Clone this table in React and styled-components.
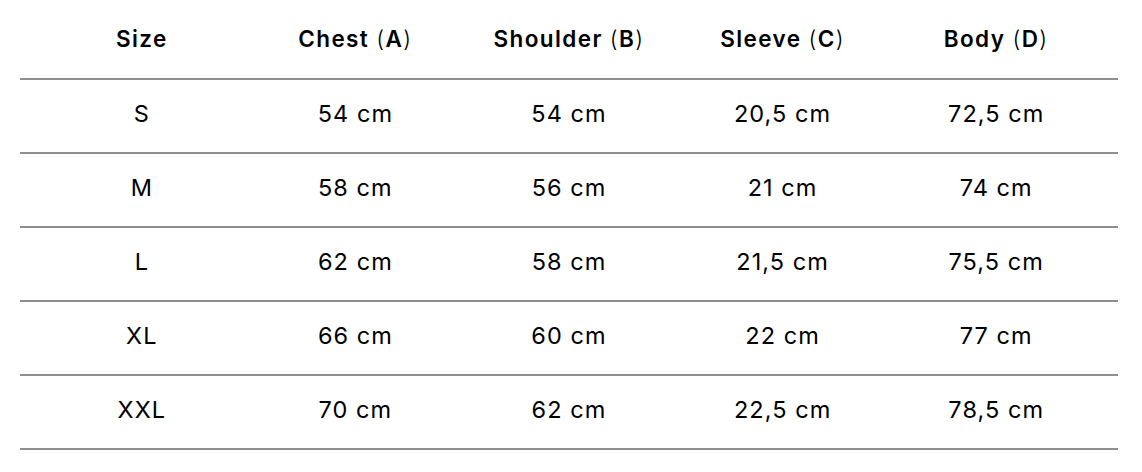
import React from "react";
import styled, { createGlobalStyle } from "styled-components";

const Global = createGlobalStyle`
  html, body { margin: 0; padding: 0; background: #fff; }
  body { font-family: Inter, "Liberation Sans", Arial, sans-serif; color: #000; }
`;

const Wrap = styled.div`
  padding: 0 24px 0 20px;
  width: 1142px;
  box-sizing: border-box;
`;

const Row = styled.div`
  display: grid;
  grid-template-columns: repeat(5, 1fr);
  align-items: center;
  padding: 0 15px;
  height: ${(p) => (p.$head ? "78px" : "72px")};
  border-bottom: 2px solid #8f8f8f;
`;

const Cell = styled.div`
  text-align: center;
  line-height: 30px;
  font-size: ${(p) => (p.$head ? "22.5px" : "23.5px")};
  font-weight: ${(p) => (p.$head ? 600 : 400)};
  letter-spacing: ${(p) => (p.$head ? "1.4px" : "1.05px")};
  padding-bottom: ${(p) => (p.$head ? "1px" : "5px")};
`;

const Paren = styled.span`
  font-weight: 300;
`;

const headers = [
  ["Size"],
  ["Chest", "A"],
  ["Shoulder", "B"],
  ["Sleeve", "C"],
  ["Body", "D"],
];

const rows = [
  ["S", "54 cm", "54 cm", "20,5 cm", "72,5 cm"],
  ["M", "58 cm", "56 cm", "21 cm", "74 cm"],
  ["L", "62 cm", "58 cm", "21,5 cm", "75,5 cm"],
  ["XL", "66 cm", "60 cm", "22 cm", "77 cm"],
  ["XXL", "70 cm", "62 cm", "22,5 cm", "78,5 cm"],
];

export default function App() {
  return (
    <>
      <Global />
      <Wrap>
        <Row $head>
          {headers.map(([label, letter]) => (
            <Cell $head key={label}>
              {label}
              {letter && (
                <>
                  {" "}
                  <Paren>(</Paren>
                  {letter}
                  <Paren>)</Paren>
                </>
              )}
            </Cell>
          ))}
        </Row>
        {rows.map((r) => (
          <Row key={r[0]}>
            {r.map((v, i) => (
              <Cell key={i}>{v}</Cell>
            ))}
          </Row>
        ))}
      </Wrap>
    </>
  );
}
